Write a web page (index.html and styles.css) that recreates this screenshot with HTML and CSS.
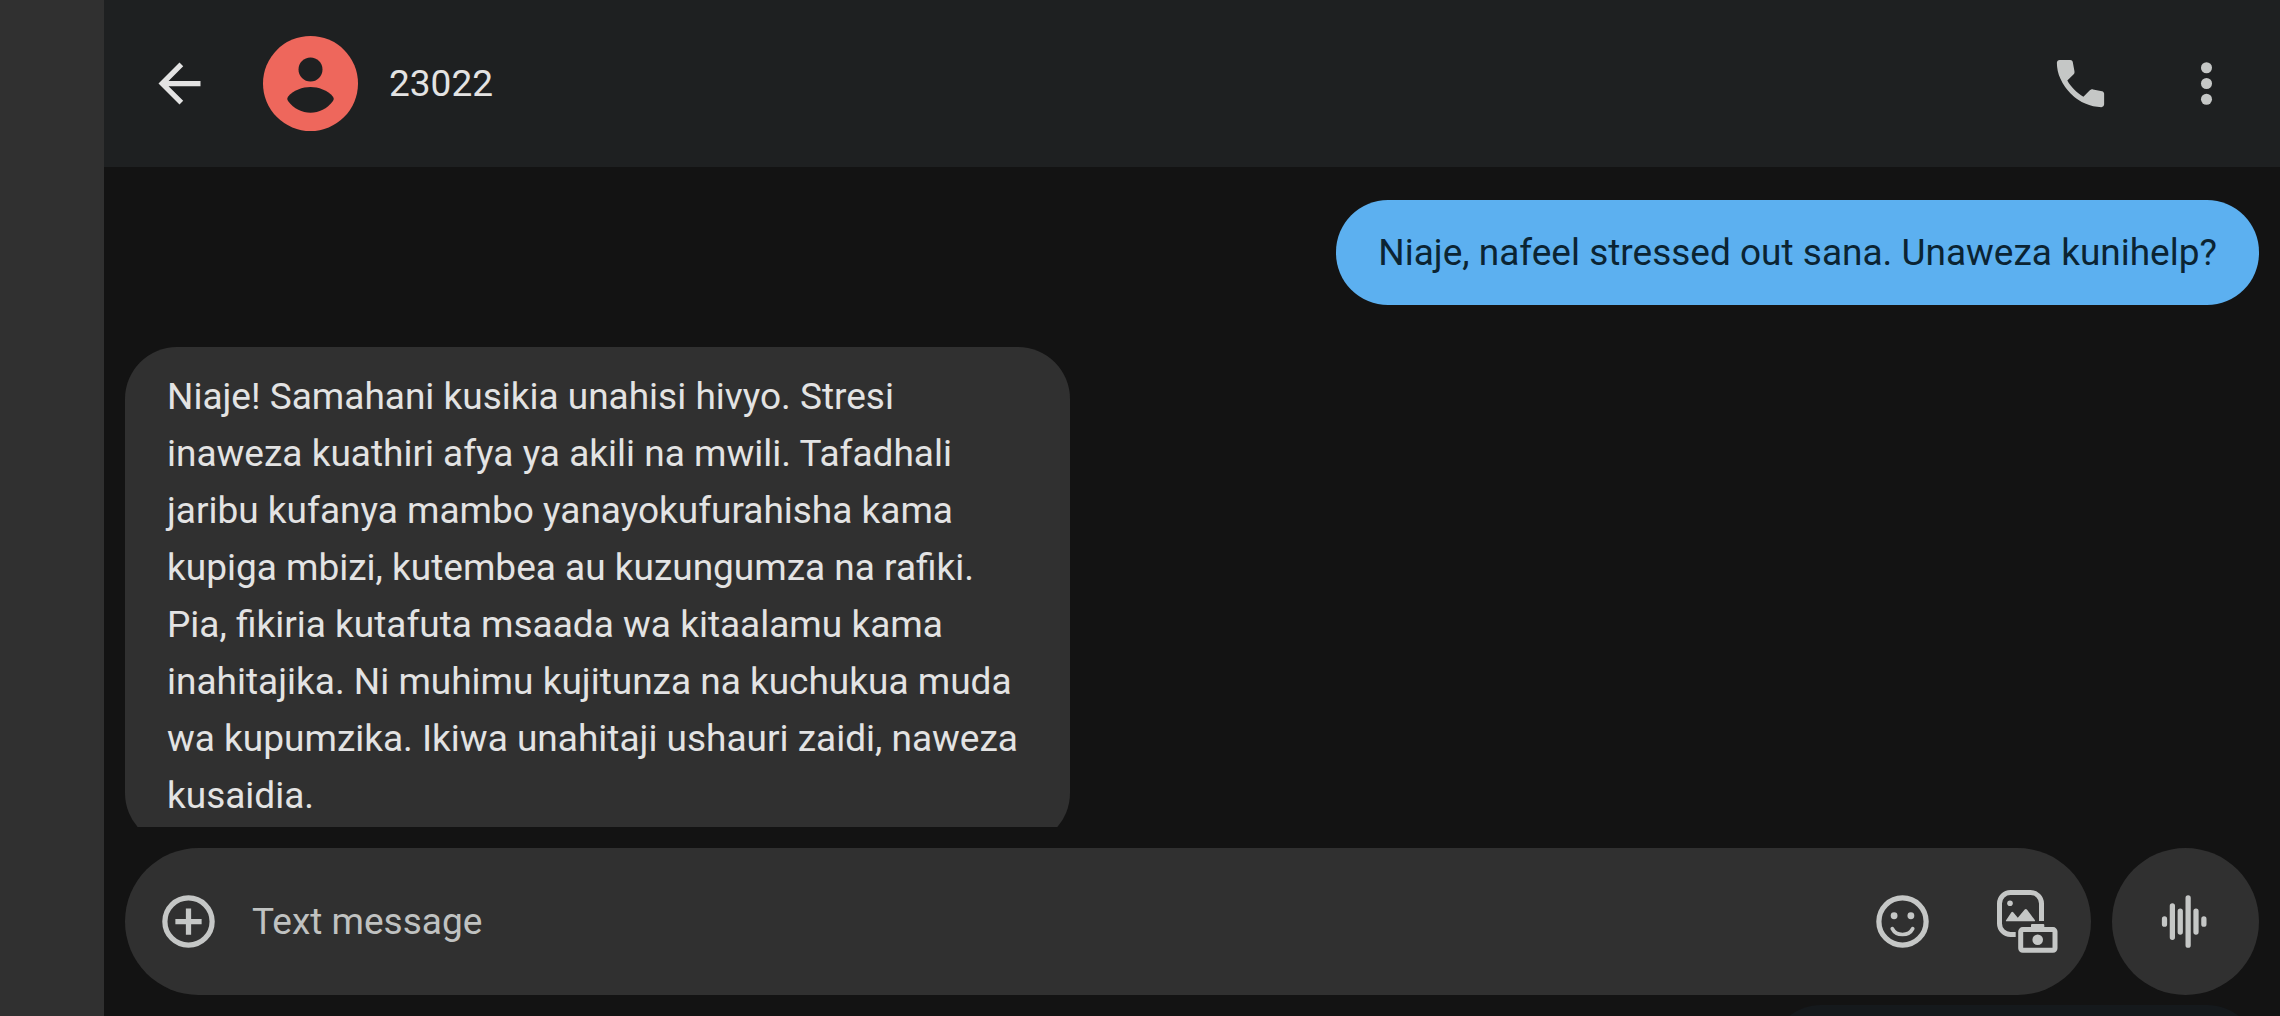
FILE: index.html
```html
<!DOCTYPE html>
<html lang="sw">
  <head>
    <meta charset="UTF-8" />
    <meta name="viewport" content="width=device-width, initial-scale=1" />
    <title>23022</title>
    <link rel="stylesheet" href="styles.css">
  </head>

  <body>
    <aside class="rail"></aside>
    <main class="chat">
      <header class="topbar">
        <button type="button" class="icon-btn back" aria-label="Back">
          <svg class="icon" viewBox="0 0 24 24">
            <path d="M20 11H7.83l5.59-5.59L12 4l-8 8 8 8 1.41-1.41L7.83 13H20v-2z" />
          </svg>
        </button>
        <svg class="avatar" viewBox="0 0 95 95" aria-hidden="true">
          <circle class="avatar-bg" cx="47.5" cy="47.5" r="47.5" />
          <circle cx="47.5" cy="33.5" r="12" />
          <path d="M24.8 61C30 54 40 51 47.5 51S65 54 70.2 61Q71.5 63 70 65C64 73 56 76.7 47.5 76.7S31 73 25 65Q23.5 63 24.8 61z" />
        </svg>
        <h1 class="contact">23022</h1>
        <div class="actions">
          <button type="button" class="icon-btn" aria-label="Call">
            <svg class="icon" viewBox="0 0 24 24">
              <path d="M19.95 21c-2.08 0-4.14-.45-6.17-1.36a17.8 17.8 0 0 1-5.55-3.87 17.8 17.8 0 0 1-3.87-5.55C3.45 8.19 3 6.13 3 4.05c0-.3.1-.55.3-.75S3.75 3 4.05 3H8.1c.23 0 .44.08.62.24.18.16.29.34.33.56l.65 3.5c.03.27.03.49-.03.68-.05.19-.14.36-.27.5L6.98 10.9c.33.62.73 1.21 1.19 1.79.46.57.96 1.12 1.51 1.65.52.52 1.06 1 1.63 1.44.57.44 1.17.85 1.8 1.22l2.35-2.35c.15-.15.35-.26.59-.34.24-.08.48-.1.71-.06l3.45.7c.23.07.43.19.57.36.15.18.22.37.22.59v4.05c0 .3-.1.55-.3.75s-.45.3-.75.3z" />
            </svg>
          </button>
          <button type="button" class="icon-btn" aria-label="More options">
            <svg class="icon" viewBox="0 0 24 24">
              <circle cx="12" cy="6" r="2.1" />
              <circle cx="12" cy="12" r="2.1" />
              <circle cx="12" cy="18" r="2.1" />
            </svg>
          </button>
        </div>
      </header>

      <section class="messages">
        <p class="bubble sent">Niaje, nafeel stressed out sana. Unaweza kunihelp?</p>
        <p class="bubble received">
          Niaje! Samahani kusikia unahisi hivyo. Stresi<br />
          inaweza kuathiri afya ya akili na mwili. Tafadhali<br />
          jaribu kufanya mambo yanayokufurahisha kama<br />
          kupiga mbizi, kutembea au kuzungumza na rafiki.<br />
          Pia, fikiria kutafuta msaada wa kitaalamu kama<br />
          inahitajika. Ni muhimu kujitunza na kuchukua muda<br />
          wa kupumzika. Ikiwa unahitaji ushauri zaidi, naweza<br />
          kusaidia.
        </p>
      </section>

      <form class="composer">
        <div class="field">
          <button type="button" class="icon-btn" aria-label="Attach">
            <svg class="icon line" viewBox="0 0 24 24">
              <circle cx="12" cy="12" r="9" />
              <path d="M12 7v10M7 12h10" />
            </svg>
          </button>
          <input class="text" type="text" name="message" placeholder="Text message" aria-label="Text message" />
          <button type="button" class="icon-btn" aria-label="Emoji">
            <svg class="icon" viewBox="0 0 24 24">
              <circle class="stroke" cx="12" cy="12" r="9" />
              <circle cx="8.8" cy="9.8" r="1.3" />
              <circle cx="15.2" cy="9.8" r="1.3" />
              <path class="stroke smile" d="M8.1 14.7c1.5 3 6.3 3 7.8 0" />
            </svg>
          </button>
          <button type="button" class="icon-btn" aria-label="Gallery">
            <svg class="icon gallery" viewBox="0 0 66 66">
              <path class="stroke" d="M19.7 45.5H14.5a11 11 0 0 1-11-11V14.5a11 11 0 0 1 11-11H34.5a11 11 0 0 1 11 11V32" />
              <circle cx="14" cy="14.3" r="2.8" />
              <path d="M10.5 32.3q-1 0-.4-1l5.3-8q.9-1.2 1.8 0l4.6 5.4 6.9-8.2q1.1-1.2 2.2 0l7.9 10.6q.7 1.2-.6 1.2z" />
              <path d="M35 38v-2q0-1 1-1h11.3q1 0 1 1v2z" />
              <rect class="stroke" x="24.7" y="40.6" width="34.3" height="20.7" rx="2" />
              <circle cx="41.7" cy="50.7" r="5.3" />
            </svg>
          </button>
        </div>
        <button type="button" class="voice" aria-label="Record voice message">
          <svg class="icon line round" viewBox="0 0 24 24">
            <path d="M4 11v2M7 6v12M10 8v8M13 3v18M16 8v8M19 11v2" />
          </svg>
        </button>
      </form>

      <div class="peek"><div class="peek-bubble"></div></div>
    </main>
  </body>
</html>
```
FILE: styles.css
```css
* {
  box-sizing: border-box;
}

body {
  display: flex;
  height: 100vh;
  margin: 0;
  overflow: hidden;
  background: #131313;
  color: #e3e3e3;
  font-family: Roboto, sans-serif;
  font-size: 37px;
}

button {
  display: flex;
  align-items: center;
  justify-content: center;
  flex: none;
  padding: 0;
  border: 0;
  background: none;
  color: #c5c7c6;
  cursor: pointer;
}

.rail {
  flex: none;
  width: 104px;
  background: #303030;
}

.chat {
  display: flex;
  flex-direction: column;
  flex: 1;
  min-width: 0;
}

/* icons */
.icon {
  display: block;
  width: 63px;
  height: 63px;
  fill: currentColor;
}

.line,
.stroke {
  fill: none;
  stroke: currentColor;
  stroke-width: 2;
}

.line.round {
  stroke-linecap: round;
}

.smile {
  stroke-width: 1.4;
  stroke-linecap: round;
}

.gallery {
  width: 66px;
  height: 66px;
}

.gallery .stroke {
  stroke-width: 5;
}

/* top bar */
.topbar {
  display: flex;
  align-items: center;
  flex: none;
  height: 167px;
  padding: 0 42px 0 44px;
  background: #1e2021;
}

.back {
  margin-right: 52px;
  color: #e3e3e3;
}

.avatar {
  width: 95px;
  height: 95px;
  margin-right: 31px;
  fill: #1e2021;
}

.avatar-bg {
  fill: #ee675c;
}

.contact {
  margin: 0;
  font-size: 37px;
  font-weight: 400;
}

.actions {
  display: flex;
  gap: 63px;
  margin-left: auto;
}

/* messages */
.messages {
  display: flex;
  flex-direction: column;
  flex: 1;
  gap: 42px;
  min-height: 0;
  padding: 33px 21px 0;
  overflow: hidden;
}

.bubble {
  flex: none;
  margin: 0;
  padding: 21px 42px;
  border-radius: 52px;
  line-height: 57px;
}

.sent {
  align-self: flex-end;
  padding: 24px 42px;
  background: #5cb0f0;
  color: #0b2433;
}

.received {
  align-self: flex-start;
  width: 945px;
  max-width: 100%;
  background: #303030;
}

/* composer */
.composer {
  display: flex;
  flex: none;
  gap: 21px;
  padding: 21px 21px 10px;
}

.field {
  display: flex;
  align-items: center;
  flex: 1;
  min-width: 0;
  height: 147px;
  padding: 0 29px 0 32px;
  border-radius: 74px;
  background: #303030;
}

.text {
  flex: 1;
  min-width: 0;
  margin: 0 32px;
  padding: 0;
  border: 0;
  outline: 0;
  background: none;
  color: #e3e3e3;
  font: inherit;
}

.text::placeholder {
  color: #c0c2c1;
  opacity: 1;
}

.field .icon-btn:last-child {
  margin-left: 62px;
}

.voice {
  width: 147px;
  height: 147px;
  border-radius: 50%;
  background: #303030;
}

/* dimmed bubble scrolled under the composer */
.peek {
  display: flex;
  justify-content: flex-end;
  flex: none;
  height: 11px;
  padding: 0 21px;
  overflow: hidden;
}

.peek-bubble {
  width: 490px;
  height: 105px;
  border-radius: 52px;
  background: #15191c;
}
```
